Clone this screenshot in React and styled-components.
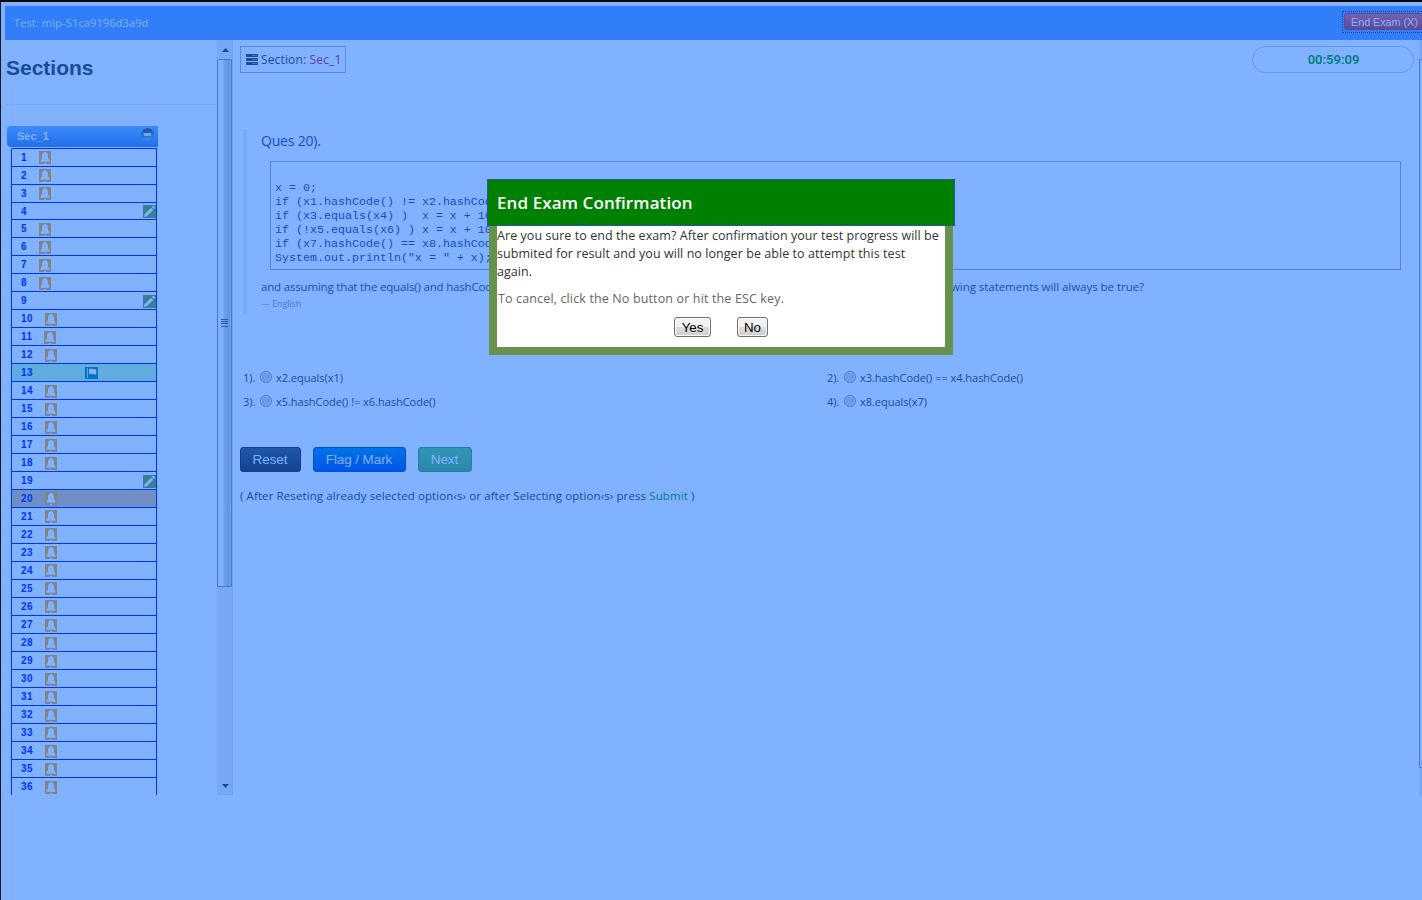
import React from "react";
import styled, { createGlobalStyle } from "styled-components";

const sans = `"Open Sans", "Noto Sans", sans-serif`;
const arial = `"Liberation Sans", Arial, sans-serif`;

const GlobalStyle = createGlobalStyle`
  * { box-sizing: border-box; }
  html, body { margin: 0; background: #80b2ff; }
  body { overflow: hidden; }
  p, h1, h2, pre { margin: 0; }
`;

const Page = styled.div`
  position: relative;
  width: 1422px;
  height: 900px;
  overflow: hidden;
  background: #80b2ff;
  border-top: 2px solid #05070c;
  border-left: 1px solid #14161c;
  padding: 4px 0 0 4px;
  font-family: ${sans};
  color: #194c99;
`;

const TopBar = styled.header`
  height: 34px;
  background: #327ef8;
  display: flex;
  align-items: center;
  justify-content: space-between;
  padding-left: 9px;
`;

const TestName = styled.span`
  margin-bottom: 2px;
  font-size: 11px;
  font-weight: 500;
  letter-spacing: 0.12px;
  color: #80b2ff;
`;

const EndFocus = styled.div`
  width: 80px;
  height: 22px;
  margin-bottom: 2px;
  padding: 1px 0 1px 1px;
  border: 1px dotted #173f8c;
  border-right: 0;
`;

const EndButton = styled.button`
  display: block;
  width: 84px;
  height: 17px;
  padding: 0 0 0 6px;
  border: 1px solid #5a4a9a;
  border-radius: 3px;
  background: linear-gradient(#765fb0, #5c4c9c);
  color: #80b2ff;
  text-align: left;
  white-space: nowrap;
  font: 11px/16px ${arial};
  letter-spacing: -0.15px;
`;

const Columns = styled.div`
  display: flex;
  height: 755px;
`;

const Sidebar = styled.aside`
  flex: none;
  width: 212px;
  overflow: hidden;
`;

const SidebarTitle = styled.h1`
  height: 65px;
  padding: 14px 0 0 1px;
  margin: 0 1px;
  border-bottom: 1px solid #77a8f5;
  font: bold 21px/28px ${arial};
  text-indent: -1px;
  color: #194c99;
`;

const SectionHead = styled.div`
  display: flex;
  justify-content: space-between;
  width: 151px;
  height: 21px;
  margin: 21px 0 1px 2px;
  padding: 2px 4px 0 10px;
  border-radius: 4px 0 0 4px;
  background: linear-gradient(#3c8afa, #226fec);
  color: #80b2ff;
  font: bold 11px/17px ${arial};
`;

const Questions = styled.div`
  width: 146px;
  margin-left: 6px;
  border: solid #0033ff;
  border-width: 0 1px;
  border-top-left-radius: 2px;
`;

const backgrounds = { flag: "#60acdf", current: "#6e8fc3" };

const Row = styled.div`
  display: flex;
  height: ${(p) => (p.$short ? 17 : 18)}px;
  padding-left: 9px;
  border-top: 1px solid #0033ff;
  background: ${(p) => backgrounds[p.$state] || "transparent"};
  color: #0033ff;
  font: bold 10px/17px ${arial};
  letter-spacing: 0.4px;
`;

const Num = styled.span`
  width: ${(p) => p.$width}px;
`;

const Glyph = styled.svg`
  display: block;
  flex: none;
  margin: ${(p) => p.$margin || "0"};
`;

const Bell = ({ lift }) => (
  <Glyph width="12" height="13" viewBox="0 0 12 13" $margin={lift ? "2px 0 0" : "3px 0 0"}>
    <rect width="12" height="13" fill="#7f8486" />
    <path d="M6 1C4 1.3 3.2 2.8 3 5V7L1.6 9.6Q1 10.6 2 10.8H10Q11 10.6 10.4 9.6L9 7V5C8.8 2.8 8 1.3 6 1Z" fill="#80b2ff" />
    <rect x="5" y="12" width="2" height="1" fill="#80b2ff" />
  </Glyph>
);

const Pencil = ({ low }) => (
  <Glyph width="13" height="13" viewBox="0 0 13 13" $margin={`${low ? 3 : 2}px 0 0 110px`}>
    <rect width="13" height="13" fill="#387f93" />
    <path d="M1 12L1.7 9.2L8.1 2.8L10.2 4.9L3.8 11.3Z" fill="#80b2ff" />
    <path d="M8.8 2.1L9.8 1.1Q10.4.7 11 1.3L11.8 2.1Q12.3 2.7 11.8 3.2L10.9 4.2Z" fill="#80b2ff" />
  </Glyph>
);

const Flag = () => (
  <Glyph width="13" height="12" viewBox="0 0 13 12" $margin="3px 0 0 46px">
    <rect width="13" height="12" fill="#0574c4" />
    <path d="M2.5 1V11" stroke="#60a4ec" />
    <path d="M4 2Q6 1 7.8 2Q9.6 2.7 11.2 2V7.2Q9.4 8 7.6 7.1Q6 6.3 4 7.2Z" fill="#80b2ff" />
  </Glyph>
);

const Minus = () => (
  <Glyph width="13" height="14" viewBox="0 0 13 14">
    <defs>
      <linearGradient id="minus" x1="0" y1="0" x2="0" y2="1">
        <stop offset="0" stopColor="#164fa8" />
        <stop offset="1" stopColor="#3a88f4" />
      </linearGradient>
    </defs>
    <circle cx="6.5" cy="6.5" r="6.3" fill="url(#minus)" />
    <rect x="2.5" y="5" width="8" height="3" rx="1" fill="#80b2ff" stroke="#2a5fb5" strokeWidth=".5" />
  </Glyph>
);

const Scroll = styled.div`
  flex: none;
  width: 16px;
  height: 755px;
  overflow: hidden;
  margin-right: ${(p) => p.$gap || 0}px;
  display: flex;
  flex-direction: column;
  background: #78a8f5;
  border: solid #73a4f3;
  border-width: 0 1px 1px 0;
`;

const ScrollEnd = styled.div`
  height: ${(p) => p.$height}px;
  display: flex;
  align-items: center;
  justify-content: center;
  padding-left: 1px;
`;

const Thumb = styled.div`
  height: ${(p) => p.$height}px;
  display: flex;
  align-items: center;
  justify-content: center;
  border: 1px solid #4479cd;
  border-radius: 1px;
  background: linear-gradient(90deg, #80b0fa 0 35%, #6d9fec 50%, #5f92e1 85%, #76a8f5);
`;

const Grip = () => (
  <Glyph width="7" height="8" viewBox="0 0 7 8" $margin="0 1px 0 0">
    {[0, 2, 4, 7].map((y) => (
      <rect key={y} y={y} width="7" height="1" fill="#2457a6" />
    ))}
  </Glyph>
);

const Spacer = styled.div`
  flex: ${(p) => (p.$width ? "none" : 1)};
  width: ${(p) => (p.$width ? `${p.$width}px` : "auto")};
`;

const Arrow = ({ down }) => (
  <Glyph width="7" height="4" viewBox="0 0 7 4">
    <path d={down ? "M0 0H7L3.5 4Z" : "M0 4H7L3.5 0Z"} fill="#174a96" />
  </Glyph>
);

const Main = styled.main`
  flex: none;
  width: 1174px;
  padding-top: 6px;
`;

const InfoRow = styled.div`
  display: flex;
  justify-content: space-between;
`;

const SectionTag = styled.div`
  display: flex;
  align-items: center;
  width: 106px;
  height: 27px;
  padding: 0 0 1px 5px;
  border: 1px solid #588bd9;
  font-size: 12px;
  font-weight: 500;
  letter-spacing: 0.15px;
  white-space: pre;
`;

const SectionName = styled.span`
  color: #633f9a;
`;

const Server = () => (
  <Glyph width="12" height="11" viewBox="0 0 12 11" $margin="0 3px 0 0">
    {[0, 4, 8].map((y) => (
      <g key={y}>
        <rect y={y} width="12" height="3" rx=".7" fill="#194c99" />
        <rect x="6" y={y + 1} width="5" height="1" fill="#3f72c2" />
      </g>
    ))}
  </Glyph>
);

const Timer = styled.div`
  width: 162px;
  height: 27px;
  padding-left: 1px;
  border: 1px solid #669ae9;
  border-radius: 14px;
  text-align: center;
  color: #007f80;
  font: 600 13px/25px "Roboto", sans-serif;
  letter-spacing: 0;
`;

const Quote = styled.blockquote`
  height: 184px;
  margin: 56px 13px 0 3px;
  padding: 2px 0 0 14px;
  border-left: 4px solid #78aaf6;
  color: #194bc4;
`;

const QuestionTitle = styled.h2`
  height: 30px;
  font-size: 14px;
  font-weight: 400;
  line-height: 20px;
  letter-spacing: -0.2px;
`;

const Code = styled.pre`
  height: 109px;
  margin: 0 0 0 9px;
  padding: 19px 0 0 4px;
  border: 1px solid #5487d8;
  font: 11.67px/14px "Liberation Mono", monospace;
`;

const Prompt = styled.div`
  display: flex;
  justify-content: space-between;
  width: 883px;
  margin-top: 9px;
  font-size: 11.5px;
  font-weight: 500;
  line-height: 16px;
`;

const PromptPart = styled.span`
  letter-spacing: ${(p) => p.$spacing}px;
`;

const Small = styled.div`
  margin-top: 2px;
  font-size: 9px;
  line-height: 14px;
  letter-spacing: -0.1px;
  color: #4a80d2;
`;

const Options = styled.div`
  display: grid;
  grid-template-columns: 584px 1fr;
  grid-auto-rows: 24px;
  margin: 52px 0 0 3px;
`;

const Option = styled.label`
  display: flex;
  align-items: center;
  font-size: 11px;
  letter-spacing: -0.03px;
`;

const Radio = styled.span`
  width: 12px;
  height: 12px;
  margin: 0 4px 0 3px;
  border: 1px solid #4a7fcf;
  border-radius: 50%;
  background: #6c9eed;
  box-shadow: inset 0 0 0 1px #82b2fb, inset 0 0 0 2px #6293e2;
`;

const OptionNumber = styled.span`
  width: 14px;
`;

const Actions = styled.div`
  display: flex;
  gap: 12px;
  margin-top: 34px;
`;

const tones = {
  dark: ["#2057a9", "#144391", "#163f86"],
  blue: ["#0073e9", "#0054e7", "#0252d3"],
  teal: ["#3096b5", "#2b87a9", "#287fa6"],
};

const Action = styled.button`
  width: ${(p) => p.$width}px;
  height: 25px;
  padding: 1px 1px 0 0;
  border: 1px solid ${(p) => tones[p.$tone][2]};
  border-radius: 3px;
  background: linear-gradient(${(p) => tones[p.$tone][0]}, ${(p) => tones[p.$tone][1]});
  color: #80b2ff;
  font: 13.5px/22px ${arial};
  letter-spacing: -0.1px;
`;

const Hint = styled.p`
  margin-top: 16px;
  font-size: 11.5px;
  font-weight: 500;
  line-height: 16px;
  letter-spacing: 0.1px;
`;

const Submit = styled.span`
  color: #007f80;
`;

const Modal = styled.div`
  position: absolute;
  left: 486px;
  top: 177px;
  width: 468px;
`;

const ModalHead = styled.div`
  height: 47px;
  padding-left: 9px;
  border: 1px solid #29569b;
  background: #008000;
  color: #fff;
  font-size: 17px;
  font-weight: 600;
  line-height: 45px;
  letter-spacing: 0.1px;
`;

const ModalBody = styled.div`
  height: 129px;
  margin: 0 2px;
  padding-top: 1px;
  border: 8px solid #66934b;
  border-top: 0;
  background: #fff;
  color: #333;
`;

const ModalText = styled.p`
  font-size: 12.5px;
  line-height: 18px;
  letter-spacing: 0.06px;
  white-space: nowrap;
`;

const CancelText = styled(ModalText)`
  margin: 9px 0 0 1px;
  letter-spacing: 0.14px;
  color: #666;
`;

const ModalActions = styled.div`
  display: flex;
  gap: 26px;
  margin: 9px 0 0 177px;
`;

const ModalButton = styled.button`
  width: ${(p) => p.$width}px;
  height: 20px;
  padding: 0;
  border: 1px solid #707070;
  border-radius: 3px;
  box-shadow: inset 0 0 0 1px #fafafa;
  background: linear-gradient(#f2f2f2 0 48%, #dddddd 52%, #cfcfcf);
  color: #000;
  font: 13.33px/19px ${arial};
`;

const answered = [4, 9, 19];
const questions = Array.from({ length: 36 }, (_, i) => i + 1);

function Question({ n }) {
  const state = n === 13 ? "flag" : n === 20 ? "current" : "";
  const pencil = answered.includes(n);
  const numberWidth = n < 10 ? 18 : n === 11 ? 23 : n === 13 ? 18 : 24;
  return (
    <Row $short={n === 4} $state={state}>
      <Num $width={pencil ? 12 : numberWidth}>{n}</Num>
      {pencil ? <Pencil low={n > 4} /> : n === 13 ? <Flag /> : <Bell lift={n < 4 || (n > 19 && n < 27)} />}
    </Row>
  );
}

const options = ["x2.equals(x1)", "x3.hashCode() == x4.hashCode()", "x5.hashCode() != x6.hashCode()", "x8.equals(x7)"];

const code = `x = 0;
if (x1.hashCode() != x2.hashCod
if (x3.equals(x4) )  x = x + 10
if (!x5.equals(x6) ) x = x + 10
if (x7.hashCode() == x8.hashCod
System.out.println("x = " + x);`;

export default function App() {
  return (
    <>
      <GlobalStyle />
      <Page>
        <TopBar>
          <TestName>Test: mip-51ca9196d3a9d</TestName>
          <EndFocus>
            <EndButton>End Exam (X)</EndButton>
          </EndFocus>
        </TopBar>
        <Columns>
          <Sidebar>
            <SidebarTitle>Sections</SidebarTitle>
            <SectionHead>
              Sec_1
              <Minus />
            </SectionHead>
            <Questions>
              {questions.map((n) => (
                <Question key={n} n={n} />
              ))}
            </Questions>
          </Sidebar>
          <Scroll $gap={7}>
            <ScrollEnd $height={19}><Arrow /></ScrollEnd>
            <Thumb $height={528}><Grip /></Thumb>
            <Spacer />
            <ScrollEnd $height={17}><Arrow down /></ScrollEnd>
          </Scroll>
          <Main>
            <InfoRow>
              <SectionTag>
                <Server />
                Section: <SectionName>Sec_1</SectionName>
              </SectionTag>
              <Timer>00:59:09</Timer>
            </InfoRow>
            <Quote>
              <QuestionTitle>Ques 20).</QuestionTitle>
              <Code>{code}</Code>
              <Prompt>
                <PromptPart $spacing={-0.18}>and assuming that the equals() and hashCod</PromptPart>
                <PromptPart $spacing={-0.04}>wing statements will always be true?</PromptPart>
              </Prompt>
              <Small>— English</Small>
            </Quote>
            <Options>
              {options.map((text, i) => (
                <Option key={text}>
                  <OptionNumber>{i + 1}).</OptionNumber>
                  <Radio />
                  {text}
                </Option>
              ))}
            </Options>
            <Actions>
              <Action $tone="dark" $width={61}>Reset</Action>
              <Action $tone="blue" $width={93}>Flag / Mark</Action>
              <Action $tone="teal" $width={54}>Next</Action>
            </Actions>
            <Hint>
              ( After Reseting already selected option‹s› or after Selecting option‹s› press <Submit>Submit</Submit> )
            </Hint>
          </Main>
          <Spacer $width={5} />
          <Scroll>
            <ScrollEnd $height={19} />
            <Thumb $height={709} />
          </Scroll>
        </Columns>
        <Modal role="dialog">
          <ModalHead>End Exam Confirmation</ModalHead>
          <ModalBody>
            <ModalText>Are you sure to end the exam? After confirmation your test progress will be</ModalText>
            <ModalText>submited for result and you will no longer be able to attempt this test</ModalText>
            <ModalText>again.</ModalText>
            <CancelText>To cancel, click the No button or hit the ESC key.</CancelText>
            <ModalActions>
              <ModalButton $width={37}>Yes</ModalButton>
              <ModalButton $width={31}>No</ModalButton>
            </ModalActions>
          </ModalBody>
        </Modal>
      </Page>
    </>
  );
}
